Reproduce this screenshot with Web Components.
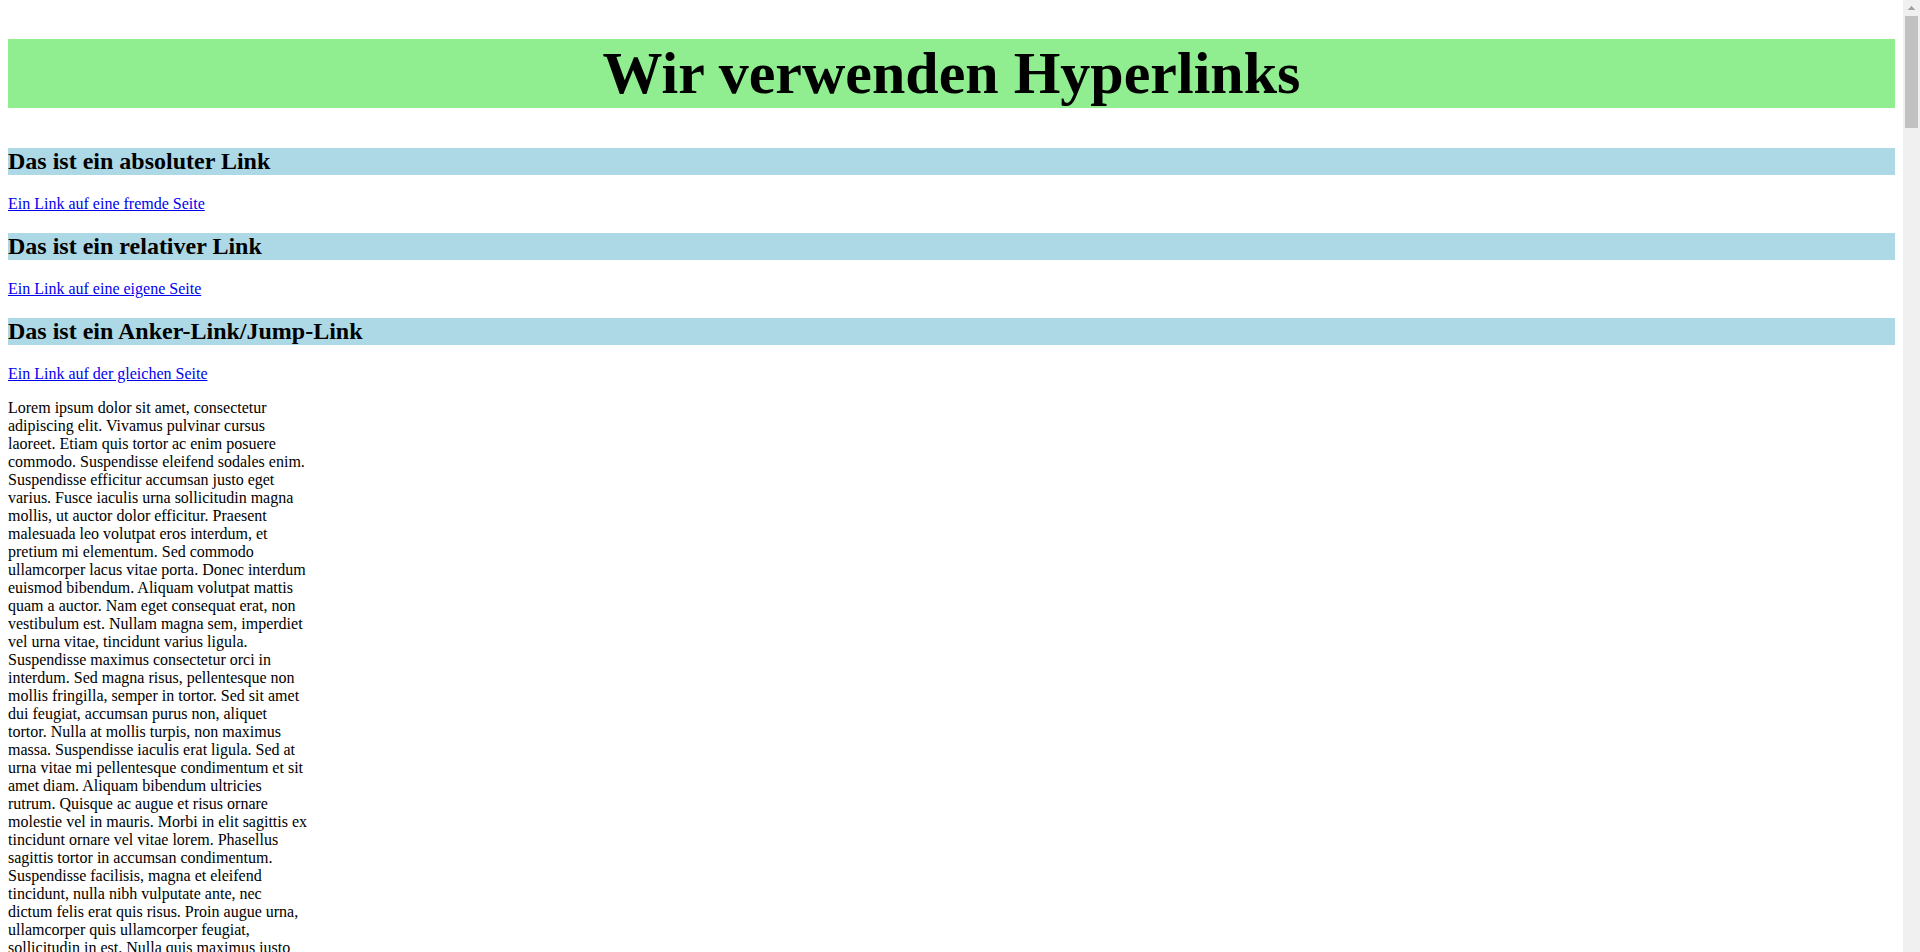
<!DOCTYPE html>
<html lang="de">
<head>
<meta charset="utf-8">
<title>Wir verwenden Hyperlinks</title>
<style>
  body { margin: 0; background: #fff; color: #000; font: 16px/18px "Liberation Serif", "Times New Roman", serif; }
</style>
</head>
<body>
<page-frame>
  <page-title>Wir verwenden Hyperlinks</page-title>
  <link-section href="https://www.example.com/" label="Ein Link auf eine fremde Seite">Das ist ein absoluter Link</link-section>
  <link-section href="seite.html" label="Ein Link auf eine eigene Seite">Das ist ein relativer Link</link-section>
  <link-section href="#ziel" label="Ein Link auf der gleichen Seite">Das ist ein Anker-Link/Jump-Link</link-section>
  <text-column id="ziel">Lorem ipsum dolor sit amet, consectetur adipiscing elit. Vivamus pulvinar cursus laoreet. Etiam quis tortor ac enim posuere commodo. Suspendisse eleifend sodales enim. Suspendisse efficitur accumsan justo eget varius. Fusce iaculis urna sollicitudin magna mollis, ut auctor dolor efficitur. Praesent malesuada leo volutpat eros interdum, et pretium mi elementum. Sed commodo ullamcorper lacus vitae porta. Donec interdum euismod bibendum. Aliquam volutpat mattis quam a auctor. Nam eget consequat erat, non vestibulum est. Nullam magna sem, imperdiet vel urna vitae, tincidunt varius ligula. Suspendisse maximus consectetur orci in interdum. Sed magna risus, pellentesque non mollis fringilla, semper in tortor. Sed sit amet dui feugiat, accumsan purus non, aliquet tortor. Nulla at mollis turpis, non maximus massa. Suspendisse iaculis erat ligula. Sed at urna vitae mi pellentesque condimentum et sit amet diam. Aliquam bibendum ultricies rutrum. Quisque ac augue et risus ornare molestie vel in mauris. Morbi in elit sagittis ex tincidunt ornare vel vitae lorem. Phasellus sagittis tortor in accumsan condimentum. Suspendisse facilisis, magna et eleifend tincidunt, nulla nibh vulputate ante, nec dictum felis erat quis risus. Proin augue urna, ullamcorper quis ullamcorper feugiat, sollicitudin in est. Nulla quis maximus justo</text-column>
</page-frame>
<script>
const define = (name, markup, setup) => customElements.define(name, class extends HTMLElement {
  constructor() {
    super();
    const template = document.createElement('template');
    template.innerHTML = markup;
    this.attachShadow({ mode: 'open' }).append(template.content.cloneNode(true));
  }
  connectedCallback() { if (setup) setup(this, this.shadowRoot); }
});

define('page-title', `
  <style>
    :host { display: block; }
    h1 { margin: 0; background: lightgreen; font-size: 60px; line-height: 69px; text-align: center; }
  </style>
  <h1><slot></slot></h1>`);

define('link-section', `
  <style>
    :host { display: block; }
    h2 { margin: 0 0 20px; background: lightblue; font-size: 24px; line-height: 27px; }
    a { color: #00e; text-decoration: underline; }
  </style>
  <h2><slot></slot></h2>
  <div><a></a></div>`,
  (host, root) => {
    const link = root.querySelector('a');
    link.href = host.getAttribute('href');
    link.textContent = host.getAttribute('label');
  });

define('text-column', `
  <style>
    :host { display: block; }
    p { margin: 0; max-width: 300px; }
  </style>
  <p><slot></slot></p>`);

define('scroll-rail', `
  <style>
    :host { display: flex; flex-direction: column; flex: none; width: 17px; background: #f0f0f0; }
    button { display: block; width: 17px; height: 16px; padding: 0; border: 0; background: none; }
    svg { display: block; }
    .thumb { height: 112px; margin: 0 2px; background: #c1c1c1; }
  </style>
  <button type="button" aria-label="Nach oben">
    <svg width="17" height="16" viewBox="0 0 17 16" shape-rendering="crispEdges" fill="#a3a3a3"><path d="M8 6h1v1h1v1h1v1h1v1H5V9h1V8h1V7h1z"/></svg>
  </button>
  <div class="thumb"></div>`);

define('page-frame', `
  <style>
    :host { display: flex; height: 100vh; overflow: hidden; }
    main { flex: 1; min-width: 0; box-sizing: border-box; padding: 39px 8px 0; overflow-y: auto; scrollbar-width: none; }
    ::slotted(page-title) { margin-bottom: 40px; }
    ::slotted(link-section) { margin-bottom: 20px; }
    ::slotted(text-column) { margin-top: -4px; }
  </style>
  <main><slot></slot></main>
  <scroll-rail></scroll-rail>`,
  (host, root) => {
    const main = root.querySelector('main');
    root.querySelector('scroll-rail').addEventListener('click', () => main.scrollBy(0, -40));
  });
</script>
</body>
</html>
